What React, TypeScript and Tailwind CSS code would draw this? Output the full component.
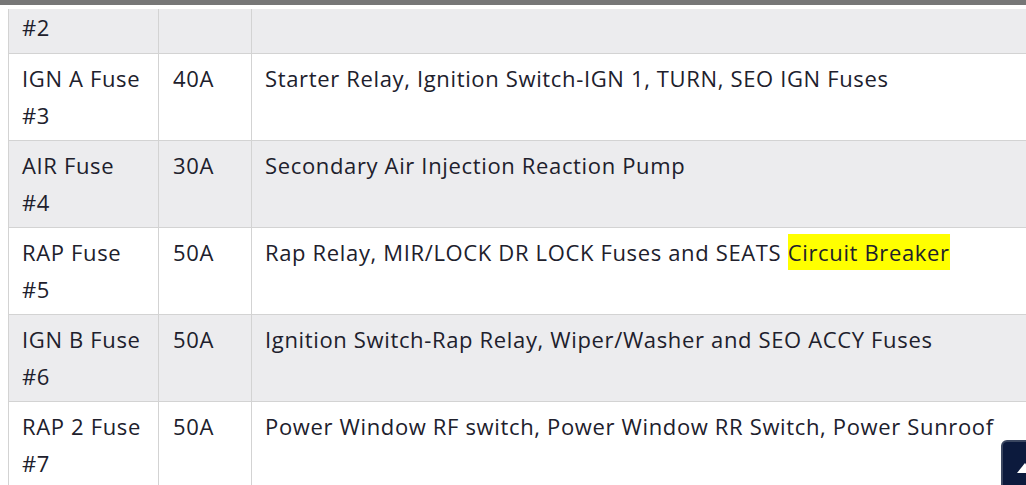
import React from "react";

const rows: { name: string[]; amp: string; desc: React.ReactNode; gray: boolean }[] = [
  { name: ["IGN A Fuse", "#3"], amp: "40A", desc: "Starter Relay, Ignition Switch-IGN 1, TURN, SEO IGN Fuses", gray: false },
  { name: ["AIR Fuse", "#4"], amp: "30A", desc: "Secondary Air Injection Reaction Pump", gray: true },
  {
    name: ["RAP Fuse", "#5"],
    amp: "50A",
    desc: (
      <>
        Rap Relay, MIR/LOCK DR LOCK Fuses and SEATS{" "}
        <span className="bg-[#ffff00] py-[3px]">Circuit Breaker</span>
      </>
    ),
    gray: false,
  },
  { name: ["IGN B Fuse", "#6"], amp: "50A", desc: "Ignition Switch-Rap Relay, Wiper/Washer and SEO ACCY Fuses", gray: true },
  { name: ["RAP 2 Fuse", "#7"], amp: "50A", desc: "Power Window RF switch, Power Window RR Switch, Power Sunroof", gray: false },
];

export default function App() {
  return (
    <div
      className="relative w-[1026px] h-[485px] overflow-hidden bg-white text-[#20202c]"
      style={{ fontFamily: "'Open Sans', Lato, sans-serif" }}
    >
      <div className="h-[5px] bg-[#777777]" />
      <div className="pt-[4px] pl-[8px]">
        <table className="w-[1040px] border-collapse text-[22px] leading-[37px] tracking-[0.65px]">
          <colgroup>
            <col className="w-[150px]" />
            <col className="w-[93px]" />
            <col />
          </colgroup>
          <tbody>
            <tr className="bg-[#ececee]">
              <td className="border border-[#d3d3d3] border-t-0 pl-[13px] pr-[14px] pt-0 pb-[7px] align-top">#2</td>
              <td className="border border-[#d3d3d3] border-t-0 px-[14px] align-top"></td>
              <td className="border border-[#d3d3d3] border-t-0 px-[14px] align-top"></td>
            </tr>
            {rows.map((r, i) => (
              <tr key={i} className={r.gray ? "bg-[#ececee]" : "bg-white"}>
                <td className="border border-[#d3d3d3] pl-[13px] pr-[14px] pt-[6px] pb-[6px] align-top h-[87px] whitespace-nowrap">
                  {r.name[0]}
                  <br />
                  {r.name[1]}
                </td>
                <td className="border border-[#d3d3d3] px-[14px] pt-[6px] pb-[6px] align-top">{r.amp}</td>
                <td className="border border-[#d3d3d3] pl-[13px] pr-[14px] pt-[6px] pb-[6px] align-top whitespace-nowrap">{r.desc}</td>
              </tr>
            ))}
          </tbody>
        </table>
      </div>
      <div className="absolute left-[1001px] top-[440px] w-[50px] h-[50px] rounded-[6px] bg-[#0c1a3d] border-2 border-[#3a4660]">
        <div className="absolute left-[14px] top-[21px] w-0 h-0 border-l-[8px] border-r-[8px] border-b-[10px] border-l-transparent border-r-transparent border-b-white" />
      </div>
    </div>
  );
}
